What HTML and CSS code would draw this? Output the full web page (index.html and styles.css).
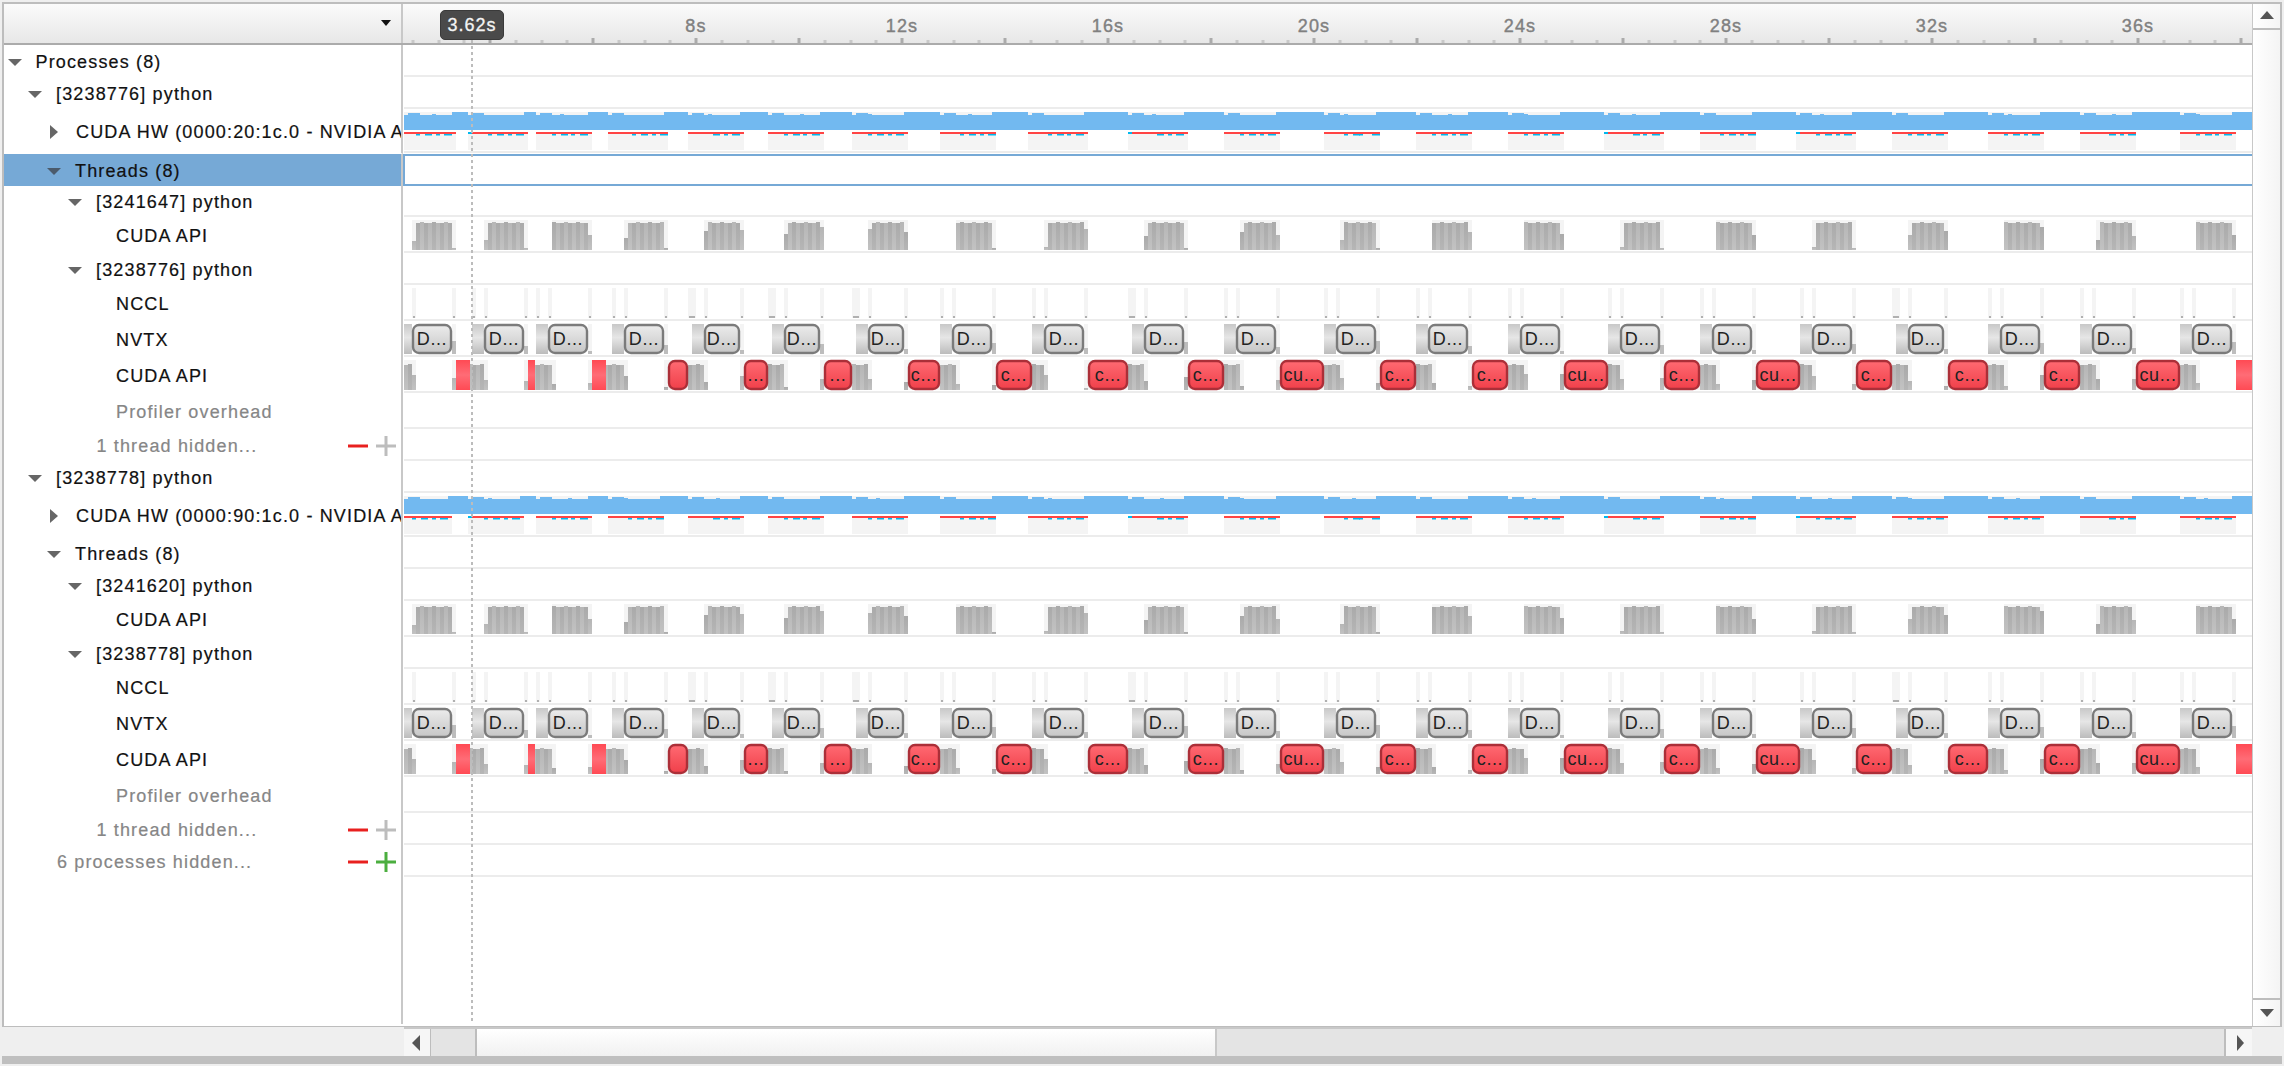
FILE: index.html
```html
<!DOCTYPE html>
<html lang="en">
<head>
<meta charset="utf-8">
<title>Timeline</title>
<link rel="stylesheet" href="styles.css">
</head>
<body>
<svg class="defs" width="0" height="0" aria-hidden="true">
  <defs>
    <linearGradient id="barA" x1="0" y1="0" x2="0" y2="1"><stop offset="0" stop-color="#aaaaaa"/><stop offset="1" stop-color="#b6b6b6"/></linearGradient>
    <linearGradient id="barB" x1="0" y1="0" x2="0" y2="1"><stop offset="0" stop-color="#b6b6b6"/><stop offset="1" stop-color="#c2c2c2"/></linearGradient>
    <linearGradient id="grayPad" x1="0" y1="0" x2="0" y2="1"><stop offset="0" stop-color="#c8c8c8"/><stop offset=".45" stop-color="#e6e6e6"/><stop offset="1" stop-color="#bcbcbc"/></linearGradient>
    <linearGradient id="grayPill" x1="0" y1="0" x2="0" y2="1"><stop offset="0" stop-color="#ececec"/><stop offset="1" stop-color="#c6c6c6"/></linearGradient>
    <linearGradient id="redPill" x1="0" y1="0" x2="0" y2="1"><stop offset="0" stop-color="#ff6a72"/><stop offset="1" stop-color="#f0404a"/></linearGradient>
    <linearGradient id="redPad" x1="0" y1="0" x2="0" y2="1"><stop offset="0" stop-color="#ff4a54"/><stop offset=".5" stop-color="#ff6c76"/><stop offset="1" stop-color="#ff4a54"/></linearGradient>
  </defs>
</svg>
<div class="frame">
  <div class="main">
    <div class="hdr">
      <div class="hdr-left"><span class="hdr-drop"></span></div>
      <div class="hdr-right">
        <svg class="ruler" id="ruler"></svg>
        <div class="time-badge">3.62s</div>
      </div>
    </div>
    <div class="rows">
      <div class="row r32"><div class="label lv0"><i class="tri-d"></i>Processes (8)</div><div class="track"></div></div>
      <div class="row r32"><div class="label lv1"><i class="tri-d"></i>[3238776] python</div><div class="track"></div></div>
      <div class="row r44"><div class="label lv2"><i class="tri-r"></i>CUDA HW (0000:20:1c.0 - NVIDIA A</div><div class="track" data-kind="hw" data-proc="0"></div></div>
      <div class="row r33"><div class="label lv2 selected"><i class="tri-d tri-sel"></i>Threads (8)</div><div class="track track-sel"></div></div>
      <div class="row r31"><div class="label lv3"><i class="tri-d"></i>[3241647] python</div><div class="track"></div></div>
      <div class="row r36"><div class="label tx4">CUDA API</div><div class="track" data-kind="gpu" data-proc="0"></div></div>
      <div class="row r32"><div class="label lv3"><i class="tri-d"></i>[3238776] python</div><div class="track"></div></div>
      <div class="row r36"><div class="label tx4">NCCL</div><div class="track" data-kind="nccl" data-proc="0"></div></div>
      <div class="row r36"><div class="label tx4">NVTX</div><div class="track" data-kind="nvtx" data-proc="0"></div></div>
      <div class="row r36"><div class="label tx4">CUDA API</div><div class="track" data-kind="api" data-proc="0"></div></div>
      <div class="row r36"><div class="label tx4 muted">Profiler overhead</div><div class="track"></div></div>
      <div class="row r32"><div class="label tx3 muted">1 thread hidden...
        <span class="pm"><svg class="pm-icon" viewBox="0 0 20 20"><path class="minus" d="M0 10H20"/></svg><svg class="pm-icon" viewBox="0 0 20 20"><path class="plus-off" d="M0 10H20M10 0V20"/></svg></span></div><div class="track"></div></div>
      <div class="row r32"><div class="label lv1"><i class="tri-d"></i>[3238778] python</div><div class="track"></div></div>
      <div class="row r44"><div class="label lv2"><i class="tri-r"></i>CUDA HW (0000:90:1c.0 - NVIDIA A</div><div class="track" data-kind="hw" data-proc="1"></div></div>
      <div class="row r32"><div class="label lv2"><i class="tri-d"></i>Threads (8)</div><div class="track"></div></div>
      <div class="row r32"><div class="label lv3"><i class="tri-d"></i>[3241620] python</div><div class="track"></div></div>
      <div class="row r36"><div class="label tx4">CUDA API</div><div class="track" data-kind="gpu" data-proc="1"></div></div>
      <div class="row r32"><div class="label lv3"><i class="tri-d"></i>[3238778] python</div><div class="track"></div></div>
      <div class="row r36"><div class="label tx4">NCCL</div><div class="track" data-kind="nccl" data-proc="1"></div></div>
      <div class="row r36"><div class="label tx4">NVTX</div><div class="track" data-kind="nvtx" data-proc="1"></div></div>
      <div class="row r36"><div class="label tx4">CUDA API</div><div class="track" data-kind="api" data-proc="1"></div></div>
      <div class="row r36"><div class="label tx4 muted">Profiler overhead</div><div class="track"></div></div>
      <div class="row r32"><div class="label tx3 muted">1 thread hidden...
        <span class="pm"><svg class="pm-icon" viewBox="0 0 20 20"><path class="minus" d="M0 10H20"/></svg><svg class="pm-icon" viewBox="0 0 20 20"><path class="plus-off" d="M0 10H20M10 0V20"/></svg></span></div><div class="track"></div></div>
      <div class="row r32"><div class="label tx1 muted">6 processes hidden...
        <span class="pm"><svg class="pm-icon" viewBox="0 0 20 20"><path class="minus" d="M0 10H20"/></svg><svg class="pm-icon" viewBox="0 0 20 20"><path class="plus-on" d="M0 10H20M10 0V20"/></svg></span></div><div class="track"></div></div>
      <div class="row row-fill"><div class="label"></div><div class="track track-empty"></div></div>
    </div>
    <div class="cursor"></div>
  </div>
  <div class="vscroll">
    <div class="vbtn vbtn-up"><i class="arrow-up"></i></div>
    <div class="vtrack"></div>
    <div class="vbtn vbtn-down"><i class="arrow-down"></i></div>
  </div>
</div>
<div class="hscroll">
  <div class="hbtn hbtn-left"><i class="arrow-left"></i></div>
  <div class="htrack htrack-a"></div>
  <div class="hthumb"></div>
  <div class="htrack htrack-b"></div>
  <div class="hbtn hbtn-right"><i class="arrow-right"></i></div>
</div>
<div class="status"></div>
<script src="timeline.js"></script>
</body>
</html>
```
FILE: styles.css
```css
* { box-sizing: border-box; }
html, body { margin: 0; padding: 0; }
body {
  width: 2284px;
  height: 1066px;
  overflow: hidden;
  background: #efefef;
  font-family: "Liberation Sans", Arial, sans-serif;
  font-size: 18px;
  letter-spacing: 1.15px;
  color: #111;
}
.defs { position: absolute; }

.frame {
  display: flex;
  width: 2280px;
  height: 1025px;
  margin: 2px 2px 0;
  background: #fff;
  border: 2px solid #bdbdbd;
  border-bottom-width: 1px;
}
.main {
  position: relative;
  flex: 0 0 2248px;
  display: flex;
  flex-direction: column;
}

.hdr {
  display: flex;
  flex: 0 0 41px;
  border-bottom: 2px solid #ababab;
  background: linear-gradient(#fbfbfb, #e7e7e7);
}
.hdr-left {
  flex: 0 0 399px;
  display: flex;
  align-items: center;
  justify-content: flex-end;
  padding: 0 10px 1px 0;
  border-right: 2px solid #c8c8c8;
}
.hdr-drop {
  width: 0;
  height: 0;
  border-left: 5.5px solid transparent;
  border-right: 5.5px solid transparent;
  border-top: 6px solid #111;
}
.hdr-right { position: relative; flex: 1; }
.ruler { display: block; width: 100%; height: 39px; }
.rule-major { fill: #ababab; }
.rule-minor { fill: #c8c8c8; }
.rule-label {
  fill: #808080;
  stroke: #808080;
  stroke-width: .4px;
  font-size: 18px;
  letter-spacing: 1.2px;
  text-anchor: middle;
}
.time-badge {
  position: absolute;
  left: 37px;
  top: 6px;
  width: 64px;
  height: 30px;
  display: flex;
  align-items: center;
  justify-content: center;
  background: #4a4a4a;
  border: 1px solid #3a3a3a;
  border-radius: 5px;
  color: #f4f4f4;
  font-size: 18px;
  letter-spacing: 1px;
  -webkit-text-stroke: .3px #f4f4f4;
}

.rows { flex: 1; display: flex; flex-direction: column; }
.row { display: flex; }
.r31 { flex: 0 0 31px; }
.r32 { flex: 0 0 32px; }
.r33 { flex: 0 0 33px; }
.r36 { flex: 0 0 36px; }
.r44 { flex: 0 0 44px; }
.row-fill { flex: 1; padding-bottom: 2px; }

.label {
  flex: 0 0 399px;
  margin-right: 1px;
  padding-top: 2px;
  display: flex;
  align-items: center;
  overflow: hidden;
  white-space: nowrap;
  border-right: 2px solid #c8c8c8;
  -webkit-text-stroke: .2px;
}
.selected {
  background: #76a9d6;
  background-clip: padding-box;
  border-top: 1px solid #fff;
}
.muted { color: #868686; }
.lv0 { padding-left: 3.5px; }
.lv1 { padding-left: 24px; }
.lv2 { padding-left: 43px; }
.lv3 { padding-left: 64px; }
.tx1 { padding-left: 53px; }
.tx3 { padding-left: 92.5px; }
.tx4 { padding-left: 112px; }

.tri-d {
  flex: none;
  width: 0;
  height: 0;
  margin-right: 14px;
  border-left: 7.5px solid transparent;
  border-right: 7.5px solid transparent;
  border-top: 7px solid #666;
}
.tri-sel { border-top-color: #4b5b6c; }
.tri-r {
  flex: none;
  width: 0;
  height: 0;
  margin: 0 18px 0 3px;
  border-top: 7.5px solid transparent;
  border-bottom: 7.5px solid transparent;
  border-left: 8px solid #666;
}

.pm { display: flex; gap: 8px; margin-left: auto; padding-right: 5px; }
.pm-icon { display: block; width: 20px; height: 20px; fill: none; stroke-width: 3; }
.minus { stroke: #e8201f; }
.plus-off { stroke: #bdbdbd; }
.plus-on { stroke: #4bae3f; }

.track { flex: 1; min-width: 0; border-bottom: 2px solid #ececec; }
.track-empty { border-bottom: 0; }
.track-sel {
  margin: 1px 0 0 -1px;
  border: 2px solid #76a9d6;
  border-right: 0;
}
.lane { display: block; width: 1848px; height: 100%; }
.pill-text { fill: #222; font-size: 18px; letter-spacing: .6px; text-anchor: middle; }

.cursor {
  position: absolute;
  left: 467px;
  top: 36px;
  bottom: 2px;
  width: 2px;
  background: repeating-linear-gradient(#bcbcbc 0 3px, transparent 3px 6px);
}

.vscroll {
  flex: 1;
  display: flex;
  flex-direction: column;
  border-left: 1px solid #c8c8c8;
  background: linear-gradient(90deg, #fff, #f4f4f4);
}
.vbtn { flex: 0 0 26px; display: flex; align-items: center; justify-content: center; }
.vbtn-up { border-bottom: 2px solid #bdbdbd; padding-bottom: 2px; }
.vbtn-down { flex-basis: 28px; border-top: 2px solid #bdbdbd; }
.vtrack { flex: 1; }
.arrow-up { width: 0; height: 0; border-left: 7.5px solid transparent; border-right: 7.5px solid transparent; border-bottom: 8px solid #555; }
.arrow-down { width: 0; height: 0; border-left: 7.5px solid transparent; border-right: 7.5px solid transparent; border-top: 8px solid #555; }

.hscroll {
  display: flex;
  width: 1848px;
  height: 29px;
  margin-left: 404px;
  border-top: 2px solid #c8c8c8;
}
.hbtn { display: flex; align-items: center; background: #f6f6f6; }
.hbtn-left { flex: 0 0 27px; padding-left: 8px; border-right: 1px solid #bdbdbd; }
.hbtn-right { flex: 0 0 28px; padding-left: 11px; border-left: 2px solid #bdbdbd; }
.htrack { background: #e4e4e4; }
.htrack-a { flex: 0 0 44px; }
.htrack-b { flex: 1; }
.hthumb {
  flex: 0 0 742px;
  border-left: 2px solid #bdbdbd;
  border-right: 2px solid #c8c8c8;
  background: linear-gradient(#fff, #f1f1f1);
}
.arrow-left { width: 0; height: 0; border-top: 8px solid transparent; border-bottom: 8px solid transparent; border-right: 8px solid #555; }
.arrow-right { width: 0; height: 0; border-top: 8px solid transparent; border-bottom: 8px solid transparent; border-left: 7px solid #555; }

.status { height: 8px; margin: 0 2px; background: #bfbfbf; }
```
FILE: timeline.js
```js
// Periodic trace data (page x coordinates, one entry per iteration)
var HW = [404,468,536,608,688,768,852,940,1028,1128,1224,1324,1416,1508,1604,1700,1796,1892,1988,2080,2180];
var E  = [456,528,592,668,744,824,908,996,1088,1188,1280,1380,1472,1564,1664,1756,1856,1948,2044,2136,2236];
var N  = [412,484,548,624,704,784,868,952,1044,1144,1236,1336,1428,1520,1620,1712,1812,1908,2000,2092,2192];
var S  = [404,472,536,612,692,772,856,940,1032,1132,1224,1324,1416,1508,1608,1700,1800,1896,1988,2080,2180];
var C  = [412,484,552,624,704,784,868,956,1044,1144,1240,1340,1432,1524,1620,1716,1812,1908,2004,2096,2196];
var WIDE = {4:1,5:1,6:1,9:1,17:1};
var CYAN_START = {1:1,9:1,14:1,16:1};
var LEFT_STEP  = [24,23,6,22,14,17,12,6,31,19,15,23,6,6,31,6,31,19,6,23,6];
var RIGHT_STEP = [31,31,19,31,13,10,15,31,12,31,18,31,15,18,31,19,31,15,11,19,19];
var PLAIN = [[456,470],[528,535],[592,606],[2236,2252]];
var PILLS = [[668,688,''],[744,768,'...'],[824,852,'...'],[908,940,'c...'],[996,1032,'c...'],[1088,1128,'c...'],
  [1188,1224,'c...'],[1280,1324,'cu...'],[1380,1416,'c...'],[1472,1508,'c...'],[1564,1608,'cu...'],[1664,1700,'c...'],
  [1756,1800,'cu...'],[1856,1892,'c...'],[1948,1988,'c...'],[2044,2080,'c...'],[2136,2180,'cu...']];

function rect(x, y, w, h, fill, extra) {
  return '<rect x="' + x + '" y="' + y + '" width="' + w + '" height="' + h + '" fill="' + fill + '"' + (extra || '') + '/>';
}
function comb(x0, x1, top, bottom) {
  var out = '';
  for (var x = x0; x < x1; x += 4) {
    var alt = (x / 4) % 2 === 0;
    var t = top + (((x * 7) % 12 === 0) ? -1 : 0);
    out += rect(x, t, 4, bottom - t, alt ? 'url(#barA)' : 'url(#barB)');
  }
  return out;
}

function hwLane(proc) {
  var ends = E.slice();
  if (proc === 1) { ends[0] -= 4; ends[1] -= 4; ends[3] -= 4; }
  var o = rect(404, 3, 1848, 18, '#f4f4f4');
  var path = 'M404 21';
  for (var x = 404; x < 2252; x += 4) {
    var top = 6;
    var inGap = false;
    for (var i = 0; i < HW.length; i++) {
      if (x >= ends[i] - 4 && x < (i + 1 < HW.length ? HW[i + 1] : 2252)) { inGap = true; break; }
      if (x >= HW[i] && x < ends[i]) {
        var k = (x - HW[i]) / 4;
        var seed = (i * 5 + k * 3 + proc) % 7;
        top = k === 0 ? 6 : (k < 4 ? 4 : (seed === 0 && k < 9 ? 5 : 6));
        break;
      }
    }
    if (inGap) top = 3;
    path += 'L' + x + ' ' + top + 'L' + (x + 4) + ' ' + top;
  }
  path += 'L2252 21Z';
  o += '<path d="' + path + '" fill="#72b9f0"/>';
  for (var j = 0; j < HW.length; j++) {
    var a = HW[j], b = ends[j];
    o += rect(a, 25, b - a, 16, '#f4f4f4');
    var cyan = [[-40, -36], [-31, -24], [-20, -16], [-12, -4]];
    for (var c = 0; c < cyan.length; c++) {
      var sh = (j % 3 === 2 && c === 2) ? -1 : (j % 4 === 3 ? 4 : 0);
      if (j % 5 === 4 && c === 0) continue;
      o += rect(b + cyan[c][0] + sh, 25, cyan[c][1] - cyan[c][0], 1.5, '#00b8ee');
    }
    var redStart = a;
    if (CYAN_START[j]) { o += rect(a, 23, 4, 2, '#00b8ee'); redStart = a + 4; }
    o += rect(redStart, 23, b - redStart, 2, '#ff4444');
  }
  return o;
}

function gpuLane() {
  var o = '';
  for (var i = 0; i < C.length; i++) {
    var st = C[i], en = E[i];
    o += rect(st, 3, en - st, 30, '#f4f4f4');
    var hasStep = LEFT_STEP[i] > 6;
    if (hasStep) o += comb(st, st + 4, LEFT_STEP[i], 33);
    o += comb(hasStep ? st + 4 : st, en - 4, 6, 33);
    o += comb(en - 4, en, RIGHT_STEP[i], 33);
  }
  return o;
}

function ncclLane() {
  var o = '';
  for (var i = 0; i < N.length; i++) {
    var ticks = [[N[i], 4], [E[i] - 4, 4]];
    if (i > 0) ticks.push(WIDE[i] ? [S[i] - 4, 8] : [S[i], 4]);
    for (var t = 0; t < ticks.length; t++) {
      o += rect(ticks[t][0], 3, ticks[t][1], 30, '#f4f4f4');
      o += rect(ticks[t][0] + 1, 31, ticks[t][1] - 2, 2, '#b0b0b0');
    }
  }
  return o;
}

function nvtxLane() {
  var o = '';
  for (var i = 0; i < N.length; i++) {
    o += rect(S[i], 3, N[i] - S[i], 30, 'url(#grayPad)');
    o += rect(E[i] - 4, 3, 4, 30, '#f4f4f4');
    o += rect(E[i] - 4, 20 + (i * 5) % 11, 4, 33 - (20 + (i * 5) % 11), '#bdbdbd');
    var x = N[i] + 1, w = E[i] - 4 - N[i] - 2;
    o += '<rect x="' + x + '" y="4" width="' + w + '" height="28" rx="6" fill="url(#grayPill)" stroke="#7b7b7b" stroke-width="2.4"/>';
    o += '<text class="pill-text" x="' + (x + w / 2) + '" y="24">D...</text>';
  }
  return o;
}

function apiLane() {
  var o = '';
  for (var i = 0; i < C.length; i++) {
    var lightStart = i === 0 ? 404 : E[i - 1] - 4;
    var lightEnd = C[i] + 4;
    o += rect(lightStart, 3, lightEnd - lightStart, 30, '#f4f4f4');
    if (i > 0) o += comb(E[i - 1] - 4, E[i - 1], 18 + (i * 3) % 14, 33);
    var combStart = i === 0 ? 404 : S[i] - (WIDE[i] ? 4 : 0);
    if (i === 1) combStart = 468;
    if (i === 2) combStart = 532;
    if (i === 3) combStart = 604;
    o += comb(combStart, lightEnd - 4, 8, 33);
    o += comb(lightEnd - 4, lightEnd, 18 + (i * 5) % 13, 33);
  }
  PLAIN.forEach(function (p) { o += rect(p[0], 3, p[1] - p[0], 30, 'url(#redPad)'); });
  PILLS.forEach(function (p) {
    var x = p[0] + 1, w = p[1] - p[0] - 2;
    o += '<rect x="' + x + '" y="4" width="' + w + '" height="28" rx="6" fill="url(#redPill)" stroke="#ab2f38" stroke-width="2.4"/>';
    if (p[2]) o += '<text class="pill-text" x="' + (x + w / 2) + '" y="24">' + p[2] + '</text>';
  });
  return o;
}

var LANES = { hw: hwLane, gpu: gpuLane, nccl: ncclLane, nvtx: nvtxLane, api: apiLane };
document.querySelectorAll('.track[data-kind]').forEach(function (track) {
  var h = track.clientHeight;
  track.innerHTML = '<svg class="lane" viewBox="404 0 1848 ' + h + '">' +
    LANES[track.dataset.kind](Number(track.dataset.proc)) + '</svg>';
});

// Time ruler: 51.5px per second, offset 284px from the left of the page
var ruler = document.getElementById('ruler');
var g = '';
ruler.setAttribute('viewBox', '403 0 1849 39');
for (var half = 5; half <= 76; half++) {
  var x = Math.round(284 + 25.75 * half);
  if (half % 4 === 0) g += rect(x - 1.5, 34, 3, 5, '', ' class="rule-major"').replace(' fill=""', '');
  else g += rect(x - 1.5, 36, 3, 3, '', ' class="rule-minor"').replace(' fill=""', '');
}
for (var sec = 8; sec <= 36; sec += 4) {
  g += '<text class="rule-label" x="' + (284 + 51.5 * sec) + '" y="28">' + sec + 's</text>';
}
ruler.innerHTML = g;
```
